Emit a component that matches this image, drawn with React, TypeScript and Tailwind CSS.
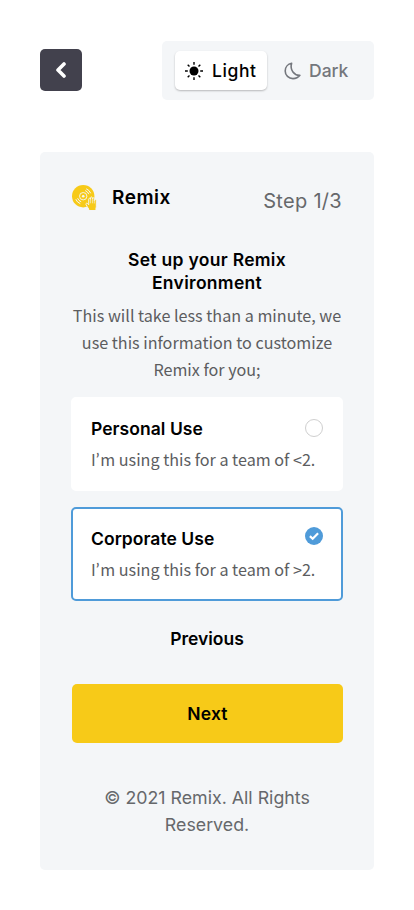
import type { ReactNode } from "react";

const display = "font-['Inter','Liberation_Sans',sans-serif]";
const body = "font-['Noto_Sans_CJK_SC','Noto_Sans',sans-serif]";

function Sun() {
  return (
    <svg width="18" height="18" viewBox="0 0 18 18" stroke="#000" strokeWidth="1.4" aria-hidden="true">
      <circle cx="9" cy="9" r="4.5" fill="#000" stroke="none" />
      <path d="M9 0v2.8M9 15.2V18M0 9h2.8M15.2 9H18M2.7 2.7l1.8 1.8M13.5 13.5l1.8 1.8M15.3 2.7l-1.8 1.8M4.5 13.5l-1.8 1.8" />
    </svg>
  );
}

function Moon() {
  return (
    <svg width="18" height="18" viewBox="0 0 18 18" fill="none" stroke="#74777d" strokeWidth="1.6" strokeLinejoin="round" aria-hidden="true">
      <path d="M7.600 1.300C3.900 2 1.200 5.100 1.200 8.900c0 4.400 3.500 7.700 7.800 7.700 3 0 5.300-1.200 6.900-3.300C10.300 13.700 5.700 8.200 7.600 1.300Z" />
    </svg>
  );
}

function Logo() {
  return (
    <svg className="mt-px" width="26" height="26" viewBox="0 0 26 26" fill="none" aria-hidden="true">
      <circle cx="11.200" cy="11.200" r="11.200" fill="#f7ca18" />
      <circle cx="11.200" cy="11.200" r="3.700" stroke="#f4f6f8" strokeWidth="0.900" />
      <circle cx="11.200" cy="11.200" r="1.300" fill="#f4f6f8" />
      <path d="M13.200 5.600a6 6 0 0 1 3.600 3.600M14.200 3.800a8 8 0 0 1 4.500 4.500M5.600 13.200a6 6 0 0 0 3.600 3.600M3.800 14.200a8 8 0 0 0 4.500 4.500" stroke="#f4f6f8" strokeWidth="1" />
      <path
        d="M17.100 24.600c-1.100-1.900-2.600-3.600-3.200-5.300-.3-1 1-1.500 1.800-.7l1 1.200v-5.600c0-1.300 1.700-1.300 1.800 0v-1.300c0-1.300 1.900-1.300 1.900 0v.8c0-1.200 1.900-1.200 1.900 0v1.800c0-1.200 2-1.200 2 0v6c0 1.200-.3 2-.8 3.100Z"
        fill="#f7ca18" stroke="#f4f6f8" strokeWidth="0.900"
      />
      <path d="M18.400 13.800v4.500M20.400 13.500v4.800M22.300 15v3.500" stroke="#f4f6f8" strokeWidth="0.600" />
      <path d="M17.200 24.400h6.200" stroke="#f7ca18" strokeWidth="1.200" />
    </svg>
  );
}

function Option({ title, selected, children }: { title: string; selected?: boolean; children: ReactNode }) {
  return (
    <button
      className={`flex h-[94px] w-[272px] items-start justify-between rounded-[5px] border-2 bg-white pt-[18px] pr-[18px] pl-[18px] text-left ${selected ? "border-[#4f9bd9]" : "border-white"}`}
    >
      <span className="flex w-[214px] flex-col">
        <span className={`${display} h-[23px] text-[17.500px] leading-[23px] font-semibold tracking-[0.05px] whitespace-nowrap text-black`}>{title}</span>
        <span className={`${body} mt-[6px] h-[27px] text-[16.150px] leading-[27px] whitespace-nowrap text-[#5c5d5f]`}>{children}</span>
      </span>
      {selected ? (
        <svg className="shrink-0" width="18" height="18" viewBox="0 0 18 18" fill="none" aria-hidden="true">
          <circle cx="9" cy="9" r="9" fill="#4f9bd9" />
          <path d="m4.900 9.100 2.800 2.700 5.400-5.500" stroke="#fff" strokeWidth="2.200" />
        </svg>
      ) : (
        <span className="mt-[2px] size-[18px] shrink-0 rounded-full border border-[#cfcfcf]" />
      )}
    </button>
  );
}

function Apostrophe() {
  return <span className="mr-[0.700px] font-['Lato','Open_Sans',sans-serif] text-[18px] leading-none">’</span>;
}

export default function App() {
  return (
    <main className={`${display} h-[910px] w-[414px] bg-white px-10 pt-[41px] text-black`}>
      <header className="flex h-[59px] items-start justify-between">
        <button aria-label="Back" className="mt-2 flex size-[42px] items-center justify-center rounded-[5px] bg-[#42414d]">
          <svg width="12" height="16" viewBox="0 0 12 16" fill="none" aria-hidden="true">
            <path d="M9 2 3 8l6 6" stroke="#fff" strokeWidth="3.600" strokeLinecap="round" strokeLinejoin="round" />
          </svg>
        </button>
        <div className="flex h-[59px] w-[212px] rounded-[5px] bg-[#f4f6f8] pt-[10px] pl-[13px] text-[17.500px] font-medium">
          <button className="flex h-[39px] w-[92px] items-center gap-[9px] rounded-[5px] bg-white pl-[10px] shadow-[0_1px_2px_rgba(0,0,0,0.25)]">
            <Sun />
            <span className="pt-[2px] tracking-[0.6px]">Light</span>
          </button>
          <button className="flex h-[39px] items-center gap-[7px] pl-[17px] text-[#74777d]">
            <Moon />
            <span className="pt-[2px]">Dark</span>
          </button>
        </div>
      </header>

      <section className="mt-[52px] flex h-[718px] flex-col items-center rounded-[5px] bg-[#f4f6f8] pt-[32px]">
        <div className="flex h-[32px] w-[270px] items-start">
          <Logo />
          <h1 className="ml-[14px] text-[19px] leading-[27px] font-semibold tracking-[0.5px]">Remix</h1>
          <p className="mt-[3px] ml-auto text-[20px] leading-[28px] tracking-[0.3px] text-[#66686b]">Step 1/3</p>
        </div>

        <h2 className="mt-[32px] text-center text-[17.500px] leading-[23px] font-semibold tracking-[0.3px]">
          Set up your Remix
          <br />
          Environment
        </h2>
        <p className={`${body} mt-[8px] text-center text-[16.150px] leading-[27px] whitespace-nowrap text-[#5c5d5f]`}>
          This will take less than a minute, we
          <br />
          use this information to customize
          <br />
          Remix for you;
        </p>

        <div className="mt-[14px] flex flex-col gap-4">
          <Option title="Personal Use">I<Apostrophe />m using this for a team of &lt;2.</Option>
          <Option title="Corporate Use" selected>I<Apostrophe />m using this for a team of &gt;2.</Option>
        </div>

        <button className="mt-[26px] h-[23px] text-[17.500px] leading-[23px] font-semibold">Previous</button>
        <button className="mt-[34px] ml-px h-[59px] w-[271px] rounded-[5px] bg-[#f7ca18] pt-[2px] text-[17.500px] font-semibold tracking-[0.2px]">Next</button>
        <footer className="mt-[41px] text-center text-[17.800px] leading-[27px] text-[#66686b]">
          © 2021 Remix. All Rights
          <br />
          Reserved.
        </footer>
      </section>
    </main>
  );
}
